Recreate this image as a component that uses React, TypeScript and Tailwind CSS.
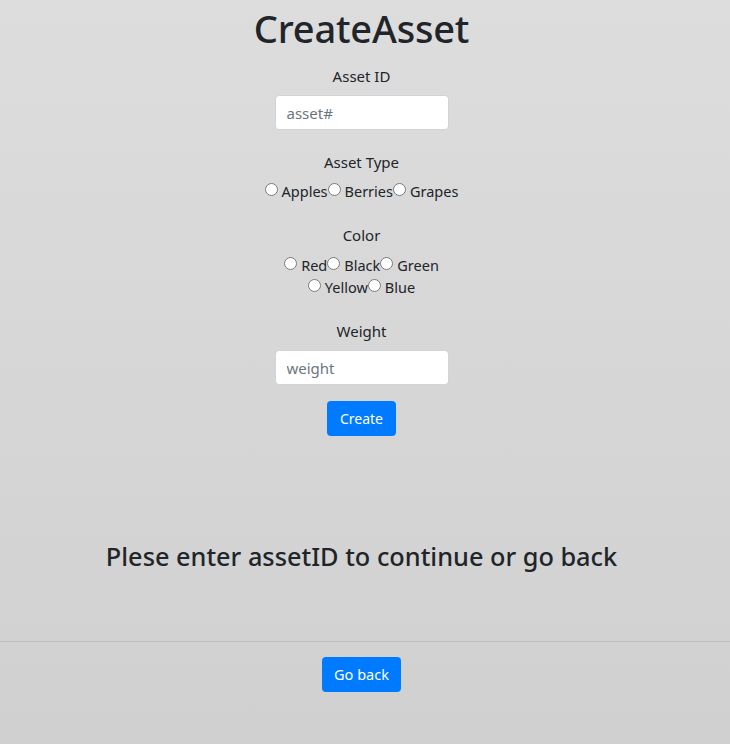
import { useState } from "react";

const assetTypes = ["Apples", "Berries", "Grapes"];
const colorRows = [
  ["Red", "Black", "Green"],
  ["Yellow", "Blue"],
];

function RadioRow({
  name,
  options,
  value,
  onChange,
}: {
  name: string;
  options: string[];
  value: string;
  onChange: (v: string) => void;
}) {
  return (
    <div className="flex items-center justify-center text-[14.5px] leading-[22px]">
      {options.map((opt) => (
        <label key={opt} className="flex items-center">
          <input
            type="radio"
            name={name}
            checked={value === opt}
            onChange={() => onChange(opt)}
            className="m-0 h-[13px] w-[13px] -translate-y-[2px]"
          />
          <span className="ml-[4px]">{opt}</span>
        </label>
      ))}
    </div>
  );
}

export default function App() {
  const [assetId, setAssetId] = useState("");
  const [type, setType] = useState("");
  const [color, setColor] = useState("");
  const [weight, setWeight] = useState("");

  return (
    <div
      className="flex min-h-[744px] w-full flex-col bg-gradient-to-b from-[#dddddd] to-[#d0d0d0] text-[#212529]"
      style={{ fontFamily: '"Noto Sans", "Open Sans", sans-serif' }}
    >
      <div className="flex flex-col items-center pr-[7px] text-[15px]">
        <h1 className="mt-[4px] text-[38px] leading-[48px] font-medium tracking-[-0.2px]">CreateAsset</h1>

        <label className="mt-[12px] leading-[24px]" htmlFor="asset-id">
          Asset ID
        </label>
        <input
          id="asset-id"
          value={assetId}
          onChange={(e) => setAssetId(e.target.value)}
          placeholder="asset#"
          className="mt-[7px] h-[35px] w-[174px] rounded-[4px] border border-[#ced4da] bg-white px-[11px] text-[15px] placeholder:text-[#6c757d] outline-none"
        />

        <div className="mt-[20px] leading-[24px]">Asset Type</div>
        <div className="mt-[6px]">
          <RadioRow name="type" options={assetTypes} value={type} onChange={setType} />
        </div>

        <div className="mt-[21px] leading-[24px]">Color</div>
        <div className="mt-[7px]">
          {colorRows.map((row, i) => (
            <RadioRow key={i} name="color" options={row} value={color} onChange={setColor} />
          ))}
        </div>

        <label className="mt-[21px] leading-[24px]" htmlFor="weight">
          Weight
        </label>
        <input
          id="weight"
          value={weight}
          onChange={(e) => setWeight(e.target.value)}
          placeholder="weight"
          className="mt-[7px] h-[35px] w-[174px] rounded-[4px] border border-[#ced4da] bg-white px-[11px] text-[15px] placeholder:text-[#6c757d] outline-none"
        />

        <button
          type="button"
          className="mt-[16px] h-[35px] rounded-[4px] bg-[#007bff] px-[13px] text-[14px] text-white"
        >
          Create
        </button>

        <h2 className="mt-[104px] text-[25.3px] leading-[32px] font-medium">
          Plese enter assetID to continue or go back
        </h2>
      </div>

      <hr className="mt-[69px] border-t border-[#bdbdbd]" />

      <div className="flex justify-center pr-[7px]">
        <button
          type="button"
          className="mt-[15px] h-[35px] rounded-[4px] bg-[#007bff] px-[12px] text-[14.5px] text-white"
        >
          Go back
        </button>
      </div>
    </div>
  );
}
